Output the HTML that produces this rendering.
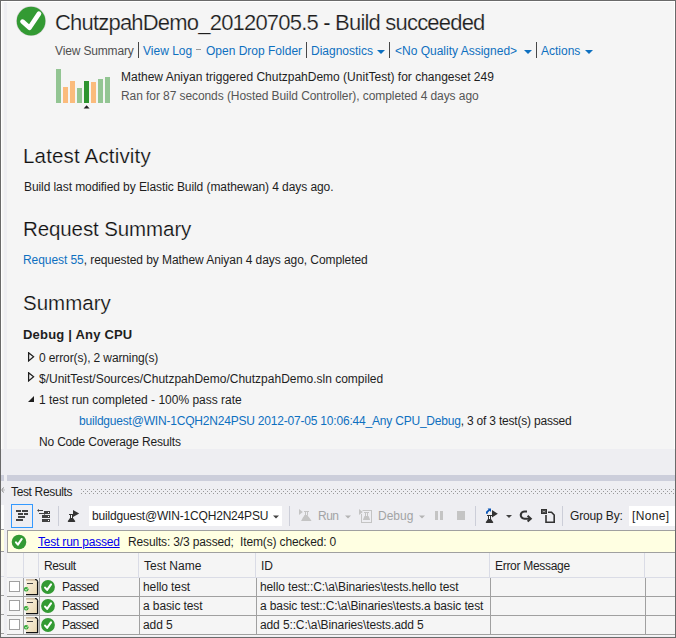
<!DOCTYPE html>
<html><head><meta charset="utf-8">
<style>
*{margin:0;padding:0;box-sizing:border-box}
html,body{width:676px;height:638px;overflow:hidden;background:#eeeef2}
body{position:relative;font-family:"Liberation Sans",sans-serif;font-size:12px;color:#1e1e1e}
.a{position:absolute;white-space:pre;line-height:16px}
.lk{color:#0e70c0}
.g{color:#555}
.h2{font-size:20.5px;line-height:24px;color:#111;-webkit-text-stroke:0.2px #f5f5f5}
#frame{position:absolute;left:0;top:0;width:676px;height:638px;border:1px solid #6a6a6a;border-bottom:1px solid #6a6a6a}
#panel{position:absolute;left:7px;top:2px;width:667px;height:447px;background:#f5f5f5}
.sep{position:absolute;width:1px;background:#474747}
.tri{position:absolute;width:0;height:0;border-left:4px solid transparent;border-right:4px solid transparent;border-top:4px solid #0e70c0}
.bar{position:absolute;width:5px}
.lg{background:#93c593}
.or{background:#fbbb7c}
.dg{background:#2e9430}
</style></head><body>
<div id="panel"></div>
<!-- white inner lines of frame -->
<div style="position:absolute;left:1px;top:1px;width:674px;height:1px;background:#fff"></div>
<div style="position:absolute;left:1px;top:1px;width:1px;height:448px;background:#fff"></div>
<div style="position:absolute;left:2px;top:2px;width:2px;height:447px;background:#f5f5f5"></div>
<div style="position:absolute;left:674px;top:1px;width:1px;height:448px;background:#fff"></div>

<!-- header icon -->
<svg style="position:absolute;left:16px;top:6px" width="31" height="31" viewBox="0 0 31 31">
<circle cx="15.05" cy="15.05" r="15" fill="#dcd8dc"/>
<circle cx="15.05" cy="15.05" r="14.35" fill="#339a33"/>
<path d="M6.5 15.6 L13.5 21.7 L23 7.6" fill="none" stroke="#fff" stroke-width="4.6" stroke-linecap="round" stroke-linejoin="round"/>
</svg>

<div class="a" style="left:55px;top:10px;font-size:22px;line-height:26px;letter-spacing:-0.8px;-webkit-text-stroke:0.2px #f5f5f5">ChutzpahDemo_20120705.5 - Build succeeded</div>

<!-- nav -->
<div class="a" style="left:55px;top:43px;color:#505050;letter-spacing:-0.15px">View Summary</div>
<div class="sep" style="left:138px;top:42px;height:16px"></div>
<div class="a lk" style="left:143px;top:43px">View Log</div>
<div style="position:absolute;left:196px;top:49px;width:5px;height:1px;background:#999"></div>
<div class="a lk" style="left:206px;top:43px">Open Drop Folder</div>
<div class="sep" style="left:306px;top:42px;height:16px"></div>
<div class="a lk" style="left:311px;top:43px">Diagnostics</div>
<div class="tri" style="left:377px;top:50px"></div>
<div class="sep" style="left:389px;top:42px;height:16px"></div>
<div class="a lk" style="left:395px;top:43px">&lt;No Quality Assigned&gt;</div>
<div class="tri" style="left:524px;top:50px"></div>
<div class="sep" style="left:536px;top:42px;height:16px"></div>
<div class="a lk" style="left:541px;top:43px">Actions</div>
<div class="tri" style="left:585px;top:50px"></div>

<!-- bars -->
<div class="bar lg" style="left:56px;top:69px;height:34px"></div>
<div class="bar or" style="left:63px;top:87px;height:16px"></div>
<div class="bar or" style="left:70px;top:81px;height:22px"></div>
<div class="bar lg" style="left:77px;top:88px;height:15px"></div>
<div class="bar dg" style="left:84px;top:81px;height:22px"></div>
<div class="bar or" style="left:91px;top:82px;height:21px"></div>
<div class="bar lg" style="left:98px;top:79px;height:24px"></div>
<div class="bar lg" style="left:105px;top:77px;height:26px"></div>
<svg style="position:absolute;left:82px;top:104px" width="10" height="6"><path d="M1.6 4.6 L4.6 1.2 L7.6 4.6 Z" fill="#1e1e1e"/></svg>

<div class="a" style="left:121px;top:69px">Mathew Aniyan triggered ChutzpahDemo (UnitTest) for changeset 249</div>
<div class="a g" style="left:121px;top:88px;letter-spacing:-0.08px">Ran for 87 seconds (Hosted Build Controller), completed 4 days ago</div>

<div class="a h2" style="left:23px;top:144px;letter-spacing:0.17px">Latest Activity</div>
<div class="a" style="left:24px;top:179px;letter-spacing:-0.08px">Build last modified by Elastic Build (mathewan) 4 days ago.</div>
<div class="a h2" style="left:23px;top:217px;letter-spacing:-0.1px">Request Summary</div>
<div class="a" style="left:23px;top:252px;letter-spacing:-0.07px"><span class="lk">Request 55</span>, requested by Mathew Aniyan 4 days ago, Completed</div>
<div class="a h2" style="left:23px;top:291px">Summary</div>
<div class="a" style="left:23px;top:327px;font-size:13px;font-weight:bold;letter-spacing:0.2px">Debug | Any CPU</div>

<svg style="position:absolute;left:27px;top:352px" width="8" height="10"><path d="M1.6 0.7 L6.6 4.8 L1.6 8.9 Z" fill="none" stroke="#1e1e1e" stroke-width="1.25"/></svg>
<div class="a" style="left:39px;top:350px;letter-spacing:-0.12px">0 error(s), 2 warning(s)</div>
<svg style="position:absolute;left:27px;top:372px" width="8" height="10"><path d="M1.6 0.7 L6.6 4.8 L1.6 8.9 Z" fill="none" stroke="#1e1e1e" stroke-width="1.25"/></svg>
<div class="a" style="left:39px;top:370.5px">$/UnitTest/Sources/ChutzpahDemo/ChutzpahDemo.sln compiled</div>
<svg style="position:absolute;left:27px;top:395px" width="8" height="8"><path d="M7 1 L7 7 L1 7 Z" fill="#1e1e1e"/></svg>
<div class="a" style="left:39px;top:392px">1 test run completed - 100% pass rate</div>
<div class="a" style="left:79px;top:413px;letter-spacing:-0.2px"><span class="lk">buildguest@WIN-1CQH2N24PSU 2012-07-05 10:06:44_Any CPU_Debug</span>, 3 of 3 test(s) passed</div>
<div class="a" style="left:39px;top:434px;letter-spacing:-0.18px">No Code Coverage Results</div>


<!-- ===== bottom tool window ===== -->
<div style="position:absolute;left:1px;top:475px;width:3px;height:6px;background:#cccedb"></div>
<div style="position:absolute;left:7px;top:475px;width:668px;height:6px;background:#cccedb"></div>
<svg style="position:absolute;left:1px;top:487px" width="4" height="7"><path d="M2.5 0.5 L0.8 3 L2.5 5.5" stroke="#777" stroke-width="0.9" fill="none"/><rect x="2.5" y="2.5" width="1" height="1" fill="#888"/></svg>
<div class="a" style="left:11px;top:484px;letter-spacing:-0.35px;color:#1e1e1e">Test Results</div>
<svg style="position:absolute;left:81px;top:489px" width="594" height="6">
<defs><pattern id="dots" width="4" height="4" patternUnits="userSpaceOnUse"><rect x="0" y="0" width="1" height="1" fill="#999"/><rect x="2" y="2" width="1" height="1" fill="#999"/></pattern></defs>
<rect x="0" y="0" width="594" height="5" fill="url(#dots)"/>
</svg>

<!-- toolbar -->
<div style="position:absolute;left:11px;top:504px;width:22px;height:24px;border:1px solid #3399ff"></div>
<svg style="position:absolute;left:0;top:500px" width="676" height="30">
<g fill="#424242">
<rect x="16" y="10" width="5" height="2"/><rect x="22" y="10" width="6" height="2"/>
<rect x="18" y="13" width="5" height="2"/><rect x="24" y="13" width="4" height="2"/>
<rect x="18" y="16" width="7" height="2"/>
<rect x="16" y="19" width="7" height="2"/>
<rect x="44" y="11" width="6" height="3"/><rect x="42" y="15" width="8" height="3"/><rect x="42" y="19" width="8" height="3"/>
</g>
<g fill="#fff"><rect x="48" y="12" width="1" height="1"/><rect x="48" y="16" width="1" height="1"/><rect x="48" y="20" width="1" height="1"/></g>
<g stroke="#424242" stroke-width="1" fill="none"><path d="M38 10.5 H43 M39 13.5 H44"/></g>
<path d="M37 10.5 L39 9 L39 12 Z M46 13.5 L44 12 L44 15 Z" fill="#424242"/>
<rect x="58" y="6" width="1" height="20" fill="#ccced8"/>
<!-- flask w arrow -->
<g fill="#333">
<rect x="69" y="14" width="5" height="1"/>
<rect x="70" y="15" width="1" height="3"/><rect x="72" y="15" width="1" height="3"/><rect x="71" y="15" width="1" height="3" fill="#fff"/>
<path d="M70 18 H73 L75.2 21 Q75.5 22 74.5 22 H68.5 Q67.5 22 67.8 21 Z"/>
<path d="M73 10 L79.2 13.5 L73 17 Z"/>
</g>
<rect x="89" y="6" width="193" height="20" fill="#fff"/>
<path d="M273 15.5 H279 L276 18.5 Z" fill="#424242"/>
<rect x="289" y="6" width="1" height="20" fill="#ccced8"/>
<!-- run flask disabled -->
<g fill="#c4c4c4">
<path d="M299 9 L302.8 12 L299 15 Z"/>
<rect x="304" y="11" width="5" height="1"/>
<rect x="305" y="12" width="1" height="3"/><rect x="307" y="12" width="1" height="3"/>
<path d="M304.5 15 H307.5 L308.6 17 H303.4 Z"/>
<path d="M303.2 17 H308.8 L311.3 20.5 Q311.5 21 311 21 H301.5 Q301 21 301.3 20.5 Z"/>
</g>
<path d="M345 15.5 H351 L348 18.5 Z" fill="#b4b4b4"/>
<g fill="#c4c4c4">
<path d="M359 9 L362.8 12 L359 15 Z"/>
<path d="M361 10 H372 V23 H361 V14 H362 V22 H371 V11 H362.5 V10 Z"/>
<rect x="364" y="12" width="5" height="1"/>
<rect x="365" y="13" width="1" height="3"/><rect x="367" y="13" width="1" height="3"/>
<path d="M364.5 16 H368.5 L370 19.5 Q370 20 369.5 20 H363.5 Q363 20 363 19.5 Z"/>
</g>
<path d="M419 15.5 H425 L422 18.5 Z" fill="#b4b4b4"/>
<rect x="435" y="11" width="3" height="9" fill="#c4c4c4"/><rect x="440" y="11" width="3" height="9" fill="#c4c4c4"/>
<rect x="457" y="11" width="8" height="9" fill="#c4c4c4"/>
<rect x="475" y="6" width="1" height="20" fill="#ccced8"/>
<!-- flask w blue arrow -->
<g fill="#333">
<rect x="487" y="15" width="5" height="1"/>
<rect x="488" y="16" width="1" height="3"/><rect x="490" y="16" width="1" height="3"/><rect x="489" y="16" width="1" height="3" fill="#fff"/>
<path d="M488 19 H491 L493.2 22 Q493.5 23 492.5 23 H486.5 Q485.5 23 485.8 22 Z"/>
<path d="M492 10 L497.8 13.8 L492 17.6 Z"/>
</g>
<path d="M486.9 13.8 V12.2 L489.6 9.6" stroke="#0a55b5" stroke-width="1.8" fill="none"/>
<path d="M487.6 8.6 H491 V12 Z" fill="#0a55b5"/>
<path d="M506 15 H512 L509 18 Z" fill="#424242"/>
<!-- refresh G -->
<path d="M527 11.5 H525 A4 3.6 0 0 0 524.5 18.7 H529.5" stroke="#333" stroke-width="2.1" fill="none"/>
<path d="M527.6 15.8 L530.8 18.7 L527.6 21.6" stroke="#333" stroke-width="2" fill="none"/>
<!-- doc icon -->
<rect x="541" y="9" width="6" height="5" fill="#333"/>
<path d="M542.5 10.8 L545.5 12.2 M545.5 10.8 L542.5 12.2" stroke="#bbb" stroke-width="0.8"/>
<path d="M548 12.2 H551.5 L554.2 15 V22.2 H546 V15" fill="none" stroke="#333" stroke-width="1.6"/>
<rect x="562" y="6" width="1" height="20" fill="#ccced8"/>
<rect x="629" y="6" width="46" height="20" fill="#fff"/>
</svg>
<div class="a" style="left:92px;top:508px;letter-spacing:-0.18px">buildguest@WIN-1CQH2N24PSU</div>
<div class="a" style="left:318px;top:508px;color:#a2a4a5;letter-spacing:-0.5px">Run</div>
<div class="a" style="left:378px;top:508px;color:#a2a4a5;letter-spacing:0px">Debug</div>
<div class="a" style="left:570px;top:508px;letter-spacing:-0.15px">Group By:</div>
<div class="a" style="left:632px;top:508px;letter-spacing:0.35px">[None]</div>

<!-- info bar -->
<div style="position:absolute;left:7px;top:530px;width:668px;height:23px;background:#ffffe2;border:1px solid #a0a0a0;border-right:none"></div>
<svg style="position:absolute;left:11px;top:534px" width="16" height="16" viewBox="0 0 16 16">
<circle cx="8" cy="8" r="7.3" fill="#339a33"/>
<path d="M5 8.4 L6.9 10.6 L10.7 5" fill="none" stroke="#fff" stroke-width="2.1" stroke-linecap="round" stroke-linejoin="round"/>
</svg>
<div class="a" style="left:38px;top:534px;color:#0000ee;text-decoration:underline;letter-spacing:-0.2px">Test run passed</div>
<div class="a" style="left:128px;top:534px;letter-spacing:-0.15px">Results: 3/3 passed;  Item(s) checked: 0</div>

<!-- table -->
<div style="position:absolute;left:7px;top:553px;width:668px;height:83px;background:#f5f5f5"></div>
<div style="position:absolute;left:1px;top:552px;width:3px;height:84px;background:#f5f5f5"></div>
<div style="position:absolute;left:1px;top:505px;width:3px;height:24px;background:#fdfdfd"></div>
<div style="position:absolute;left:1px;top:529px;width:3px;height:23px;background:#ffffe2;border-top:1px solid #a0a0a0;border-bottom:1px solid #a0a0a0"></div>
<div style="position:absolute;left:1px;top:576px;width:3px;height:1px;background:#dadce6"></div>
<div style="position:absolute;left:7px;top:577px;width:668px;height:1px;background:#dadce6"></div>
<div style="position:absolute;left:23px;top:553px;width:1px;height:24px;background:#dadce6"></div>
<div style="position:absolute;left:38px;top:553px;width:1px;height:24px;background:#dadce6"></div>
<div style="position:absolute;left:138px;top:553px;width:1px;height:24px;background:#dadce6"></div>
<div style="position:absolute;left:255px;top:553px;width:1px;height:24px;background:#dadce6"></div>
<div style="position:absolute;left:489px;top:553px;width:1px;height:24px;background:#dadce6"></div>
<div style="position:absolute;left:644px;top:553px;width:1px;height:24px;background:#dadce6"></div>
<div class="a" style="left:44px;top:558px;letter-spacing:-0.4px">Result</div>
<div class="a" style="left:144px;top:558px;letter-spacing:0px">Test Name</div>
<div class="a" style="left:261px;top:558px">ID</div>
<div class="a" style="left:495px;top:558px;letter-spacing:-0.3px">Error Message</div>


<div style="position:absolute;left:7px;top:596px;width:668px;height:1px;background:#a0a0a0"></div>
<div style="position:absolute;left:1px;top:595px;width:3px;height:1px;background:#a0a0a0"></div>
<div style="position:absolute;left:9px;top:581px;width:11px;height:11px;background:#fff;border:1px solid #a0a0a0"></div>
<svg style="position:absolute;left:24px;top:579px" width="15" height="17" viewBox="0 0 15 17">
<defs><linearGradient id="pg0" x1="0" y1="0" x2="1" y2="1"><stop offset="0" stop-color="#fbf3e2"/><stop offset="1" stop-color="#e9d7b0"/></linearGradient></defs>
<path d="M2 0.5 H11.5 L13.5 2.5 V15.5 H2 Z" fill="url(#pg0)"/>
<path d="M2 0.9 H11" stroke="#b8a080" stroke-width="1"/>
<path d="M2 15.6 H13.6 V3" fill="none" stroke="#111" stroke-width="1.3"/>
<path d="M11 0.3 Q13.6 0.6 13.9 3.2" fill="none" stroke="#222" stroke-width="1.2"/>
<rect x="3" y="4" width="6" height="1" fill="#444"/>
<circle cx="2.2" cy="10.3" r="2.3" fill="#3aaa3a"/>
<path d="M1.2 10.2 L2.2 11.3 L3.5 9.4" stroke="#e8ffe8" stroke-width="0.8" fill="none"/>
</svg>
<svg style="position:absolute;left:41px;top:580px" width="14" height="14" viewBox="0 0 14 14">
<circle cx="7" cy="7" r="6.9" fill="#339a33"/>
<path d="M4.1 7.6 L6.1 9.9 L10 4.3" fill="none" stroke="#fff" stroke-width="2.1" stroke-linecap="round" stroke-linejoin="round"/>
</svg>
<div class="a" style="left:62px;top:579px;letter-spacing:-0.55px">Passed</div>
<div class="a" style="left:143px;top:579px;letter-spacing:-0.1px">hello test</div>
<div class="a" style="left:260px;top:579px;letter-spacing:-0.12px">hello test::C:\a\Binaries\tests.hello test</div>

<div style="position:absolute;left:7px;top:615px;width:668px;height:1px;background:#a0a0a0"></div>
<div style="position:absolute;left:1px;top:614px;width:3px;height:1px;background:#a0a0a0"></div>
<div style="position:absolute;left:9px;top:600px;width:11px;height:11px;background:#fff;border:1px solid #a0a0a0"></div>
<svg style="position:absolute;left:24px;top:598px" width="15" height="17" viewBox="0 0 15 17">
<defs><linearGradient id="pg1" x1="0" y1="0" x2="1" y2="1"><stop offset="0" stop-color="#fbf3e2"/><stop offset="1" stop-color="#e9d7b0"/></linearGradient></defs>
<path d="M2 0.5 H11.5 L13.5 2.5 V15.5 H2 Z" fill="url(#pg1)"/>
<path d="M2 0.9 H11" stroke="#b8a080" stroke-width="1"/>
<path d="M2 15.6 H13.6 V3" fill="none" stroke="#111" stroke-width="1.3"/>
<path d="M11 0.3 Q13.6 0.6 13.9 3.2" fill="none" stroke="#222" stroke-width="1.2"/>
<rect x="3" y="4" width="6" height="1" fill="#444"/>
<circle cx="2.2" cy="10.3" r="2.3" fill="#3aaa3a"/>
<path d="M1.2 10.2 L2.2 11.3 L3.5 9.4" stroke="#e8ffe8" stroke-width="0.8" fill="none"/>
</svg>
<svg style="position:absolute;left:41px;top:599px" width="14" height="14" viewBox="0 0 14 14">
<circle cx="7" cy="7" r="6.9" fill="#339a33"/>
<path d="M4.1 7.6 L6.1 9.9 L10 4.3" fill="none" stroke="#fff" stroke-width="2.1" stroke-linecap="round" stroke-linejoin="round"/>
</svg>
<div class="a" style="left:62px;top:598px;letter-spacing:-0.55px">Passed</div>
<div class="a" style="left:143px;top:598px;letter-spacing:-0.1px">a basic test</div>
<div class="a" style="left:260px;top:598px;letter-spacing:-0.12px">a basic test::C:\a\Binaries\tests.a basic test</div>

<div style="position:absolute;left:7px;top:634px;width:668px;height:1px;background:#a0a0a0"></div>
<div style="position:absolute;left:1px;top:633px;width:3px;height:1px;background:#a0a0a0"></div>
<div style="position:absolute;left:9px;top:619px;width:11px;height:11px;background:#fff;border:1px solid #a0a0a0"></div>
<svg style="position:absolute;left:24px;top:617px" width="15" height="17" viewBox="0 0 15 17">
<defs><linearGradient id="pg2" x1="0" y1="0" x2="1" y2="1"><stop offset="0" stop-color="#fbf3e2"/><stop offset="1" stop-color="#e9d7b0"/></linearGradient></defs>
<path d="M2 0.5 H11.5 L13.5 2.5 V15.5 H2 Z" fill="url(#pg2)"/>
<path d="M2 0.9 H11" stroke="#b8a080" stroke-width="1"/>
<path d="M2 15.6 H13.6 V3" fill="none" stroke="#111" stroke-width="1.3"/>
<path d="M11 0.3 Q13.6 0.6 13.9 3.2" fill="none" stroke="#222" stroke-width="1.2"/>
<rect x="3" y="4" width="6" height="1" fill="#444"/>
<circle cx="2.2" cy="10.3" r="2.3" fill="#3aaa3a"/>
<path d="M1.2 10.2 L2.2 11.3 L3.5 9.4" stroke="#e8ffe8" stroke-width="0.8" fill="none"/>
</svg>
<svg style="position:absolute;left:41px;top:618px" width="14" height="14" viewBox="0 0 14 14">
<circle cx="7" cy="7" r="6.9" fill="#339a33"/>
<path d="M4.1 7.6 L6.1 9.9 L10 4.3" fill="none" stroke="#fff" stroke-width="2.1" stroke-linecap="round" stroke-linejoin="round"/>
</svg>
<div class="a" style="left:62px;top:617px;letter-spacing:-0.55px">Passed</div>
<div class="a" style="left:143px;top:617px;letter-spacing:-0.1px">add 5</div>
<div class="a" style="left:260px;top:617px;letter-spacing:-0.12px">add 5::C:\a\Binaries\tests.add 5</div>

<div style="position:absolute;left:23px;top:578px;width:1px;height:57px;background:#a0a0a0"></div>
<div style="position:absolute;left:39px;top:578px;width:1px;height:57px;background:#a0a0a0"></div>
<div style="position:absolute;left:139px;top:578px;width:1px;height:57px;background:#a0a0a0"></div>
<div style="position:absolute;left:256px;top:578px;width:1px;height:57px;background:#a0a0a0"></div>
<div style="position:absolute;left:490px;top:578px;width:1px;height:57px;background:#a0a0a0"></div>
<div style="position:absolute;left:645px;top:578px;width:1px;height:57px;background:#a0a0a0"></div>

<!-- bottom left frame border -->
<div style="position:absolute;left:0;top:0;width:1px;height:638px;background:#6a6a6a"></div>
<div style="position:absolute;left:675px;top:0;width:1px;height:638px;background:#6a6a6a"></div>
<div style="position:absolute;left:0;top:0;width:676px;height:1px;background:#6a6a6a"></div>
<div style="position:absolute;left:0;top:637px;width:676px;height:1px;background:#6a6a6a"></div>
</body></html>
